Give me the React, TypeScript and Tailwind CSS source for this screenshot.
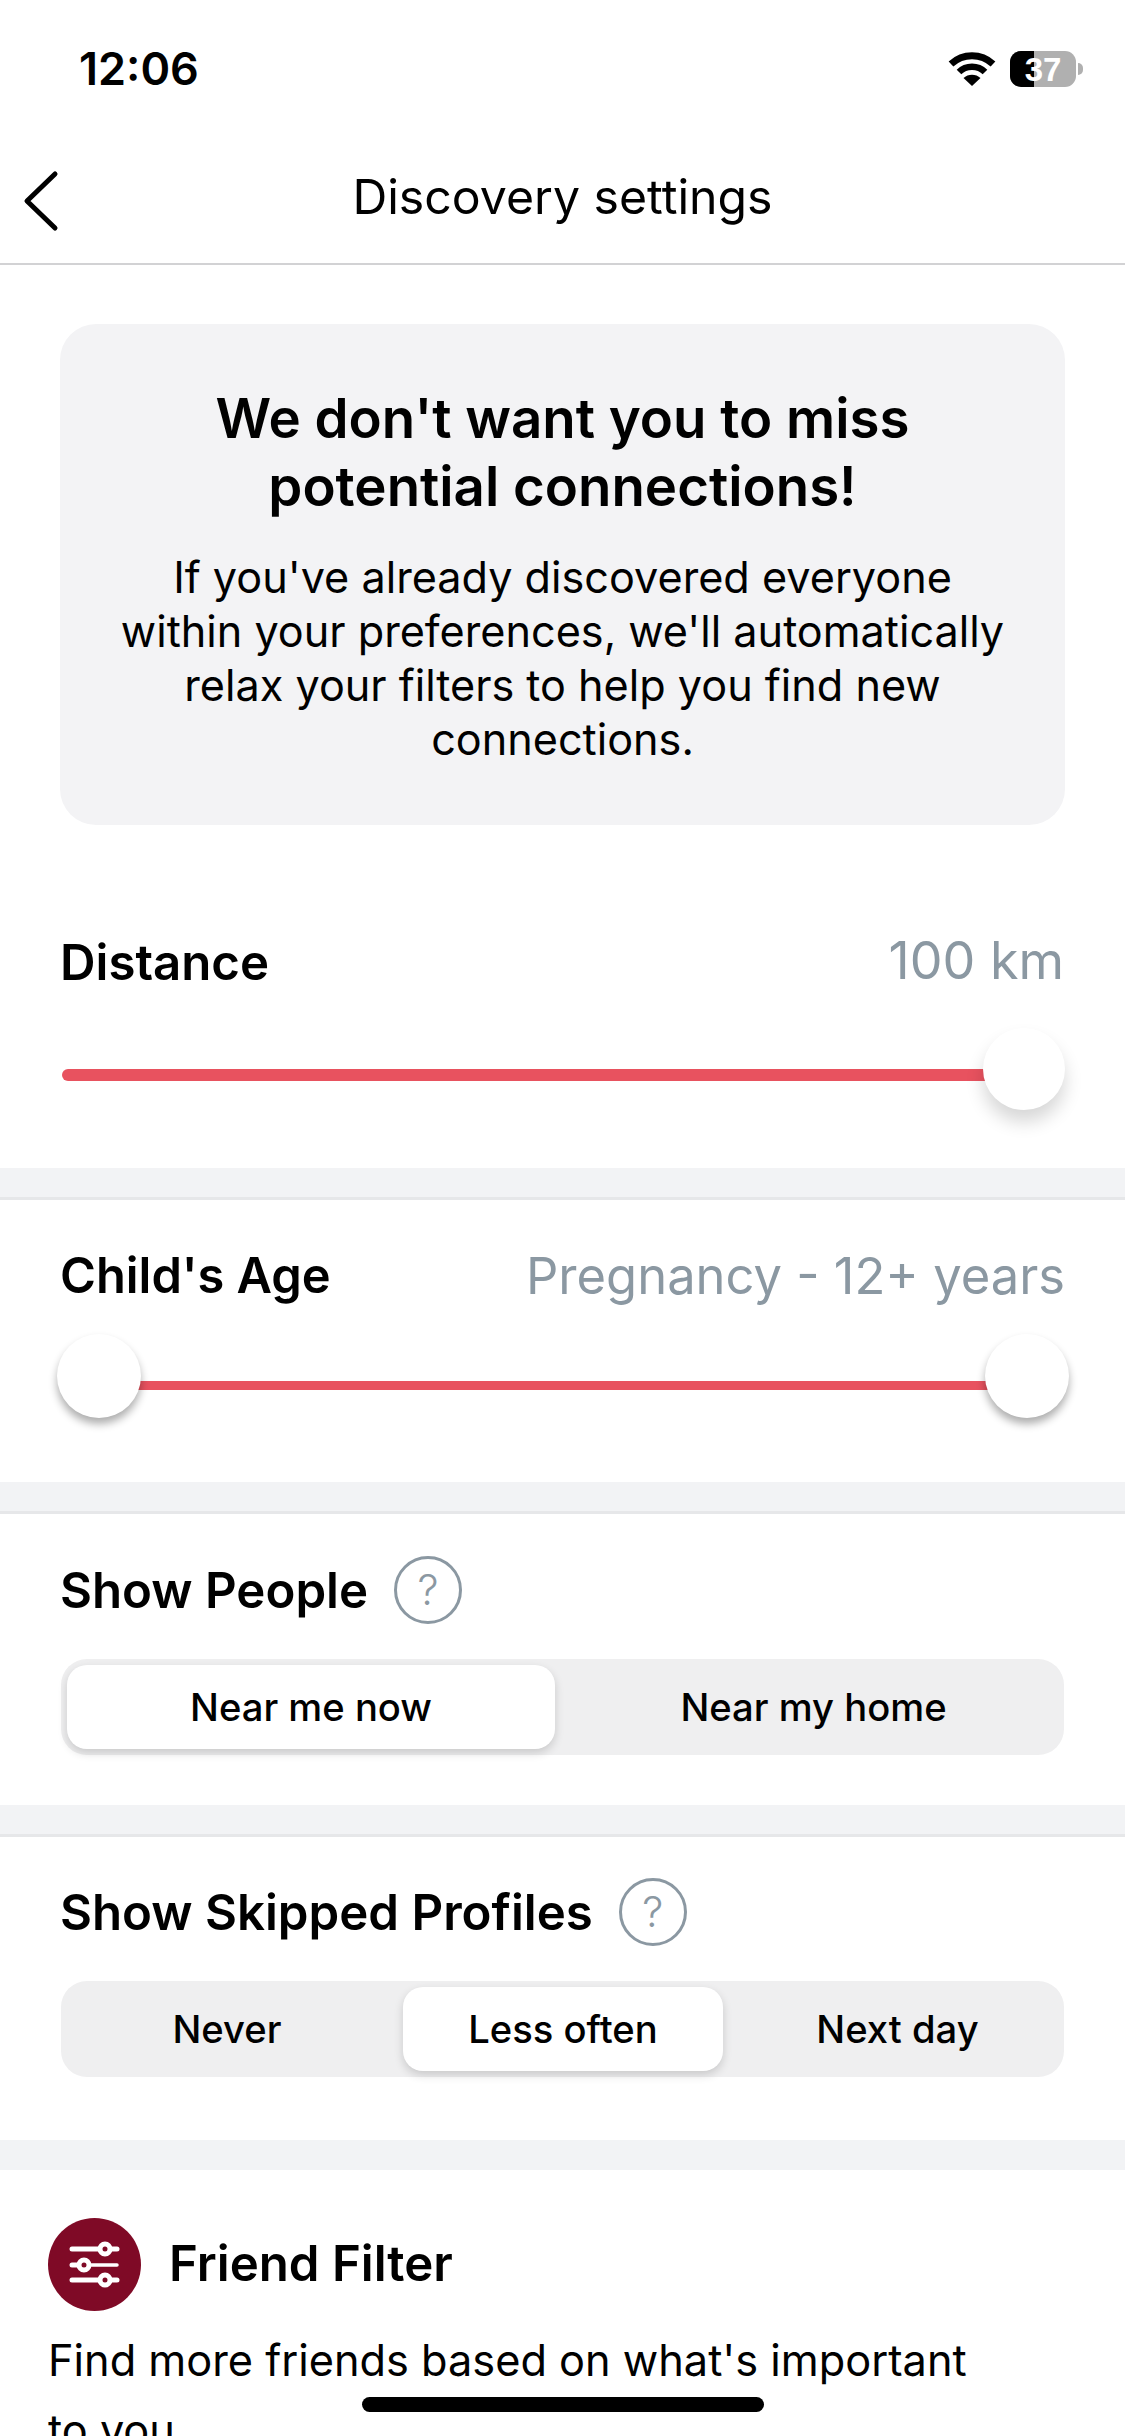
const font = "font-['Inter','Liberation_Sans',sans-serif]";

function HelpIcon() {
  return (
    <span className="flex h-[68px] w-[68px] items-center justify-center rounded-full border-[3px] border-[#8b98a2] text-[42px] font-light leading-none text-[#8b98a2]">
      ?
    </span>
  );
}

function Knob({ className }: { className: string }) {
  return <span className={`absolute rounded-full bg-white ${className}`} />;
}

function Gap({ border = true }: { border?: boolean }) {
  return (
    <div className={`bg-[#f2f3f5] ${border ? "h-[32px] border-b-[3px] border-[#e6e7e9]" : "h-[30px]"}`} />
  );
}

function Segment({
  options,
  active,
  widths,
}: {
  options: string[];
  active: number;
  widths: string[];
}) {
  return (
    <div className="flex h-[96px] items-stretch rounded-[26px] bg-[#efeff0] p-[6px]">
      {options.map((option, i) => (
        <div
          key={option}
          className={`flex items-center justify-center rounded-[20px] text-[38.2px] font-medium leading-none text-black ${widths[i]} ${
            i === active ? "bg-white shadow-[0_4px_10px_rgba(0,0,0,0.16)]" : ""
          }`}
        >
          {option}
        </div>
      ))}
    </div>
  );
}

export default function App() {
  return (
    <div className={`relative h-[2436px] w-[1125px] overflow-hidden bg-white text-black ${font}`}>
      {/* status bar */}
      <div className="flex h-[136px] items-start justify-between pl-[79px] pr-[42px] pt-[46px]">
        <span className="text-[45px] font-semibold leading-[46px]">12:06</span>
        <div className="flex items-center gap-[14px] pt-[5px]">
          <svg width="48" height="36" viewBox="0 0 48 36" fill="none">
            <path d="M3 13 C15 2 33 2 45 13" stroke="#000" strokeWidth="7" strokeLinecap="butt" />
            <path d="M11 21 C18 14 30 14 37 21" stroke="#000" strokeWidth="6.5" />
            <path d="M24 35 L15.5 27 C20 22.5 28 22.5 32.5 27 Z" fill="#000" />
          </svg>
          <div className="flex items-center gap-[2px]">
            <div className="relative flex h-[36px] w-[66px] items-center justify-center overflow-hidden rounded-[11px] bg-[#b0b0b0]">
              <span className="absolute inset-y-0 left-0 w-[24px] bg-black" />
              <span className="relative font-['Liberation_Sans',sans-serif] text-[33px] font-bold leading-none text-white">
                37
              </span>
            </div>
            <span className="h-[12px] w-[5px] rounded-r-full bg-[#b0b0b0]" />
          </div>
        </div>
      </div>

      {/* nav */}
      <div className="relative flex h-[129px] items-center justify-center border-b-[2px] border-[#d2d2d4]">
        <svg className="absolute left-[22px] top-[34px]" width="38" height="62" viewBox="0 0 38 62" fill="none">
          <path d="M33 4 L5 31 L33 58" stroke="#000" strokeWidth="5" strokeLinecap="round" strokeLinejoin="round" />
        </svg>
        <span className="mb-[5px] text-[48.2px] leading-none">Discovery settings</span>
      </div>

      {/* intro card */}
      <div className="px-[60px] pt-[59px]">
        <div className="flex h-[501px] flex-col items-center rounded-[36px] bg-[#f3f3f5] px-[40px] pt-[60px] text-center">
          <h1 className="text-[54.6px] font-semibold leading-[68px]">
            We don't want you to miss
            <br />
            potential connections!
          </h1>
          <p className="mt-[30px] text-[43.2px] leading-[54px]">
            If you've already discovered everyone
            <br />
            within your preferences, we'll automatically
            <br />
            relax your filters to help you find new
            <br />
            connections.
          </p>
        </div>
      </div>

      {/* distance */}
      <section className="h-[343px] pl-[60px] pr-[61px] pt-[106px]">
        <div className="flex items-center justify-between">
          <h2 className="text-[49.2px] font-semibold leading-[62px]">Distance</h2>
          <span className="mb-[2px] text-[52px] leading-[60px] text-[#8b98a2]">100 km</span>
        </div>
        <div className="relative mt-[76px] h-[12px]">
          <div className="ml-[2px] mr-[30px] h-full rounded-full bg-[#e8525f]" />
          <Knob className="right-[-1px] top-[-41px] h-[82px] w-[82px] shadow-[0_12px_18px_rgba(0,0,0,0.16)]" />
        </div>
      </section>
      <Gap />

      {/* child's age */}
      <section className="h-[282px] pl-[60px] pr-[60px] pt-[45px]">
        <div className="flex items-center justify-between">
          <h2 className="text-[48.8px] font-semibold leading-[62px]">Child's Age</h2>
          <span className="text-[50.7px] leading-[62px] text-[#8b98a2]">Pregnancy - 12+ years</span>
        </div>
        <div className="relative mt-[74px] h-[9px]">
          <div className="mx-[30px] h-full bg-[#e8525f]" />
          <Knob className="left-[-3px] top-[-47px] h-[84px] w-[84px] shadow-[0_6px_8px_rgba(0,0,0,0.32)]" />
          <Knob className="right-[-4px] top-[-47px] h-[84px] w-[84px] shadow-[0_6px_8px_rgba(0,0,0,0.32)]" />
        </div>
      </section>
      <Gap />

      {/* show people */}
      <section className="h-[291px] pl-[60px] pr-[61px] pt-[42px]">
        <div className="flex items-center gap-[26px]">
          <h2 className="text-[49.2px] font-semibold leading-[68px]">Show People</h2>
          <HelpIcon />
        </div>
        <div className="ml-[1px] mt-[35px]">
          <Segment
            options={["Near me now", "Near my home"]}
            active={0}
            widths={["w-[488px]", "flex-1 pl-[14px]"]}
          />
        </div>
      </section>
      <Gap />

      {/* skipped profiles */}
      <section className="h-[303px] pl-[60px] pr-[61px] pt-[41px]">
        <div className="flex items-center gap-[26px]">
          <h2 className="text-[49.2px] font-semibold leading-[68px]">Show Skipped Profiles</h2>
          <HelpIcon />
        </div>
        <div className="ml-[1px] mt-[35px]">
          <Segment
            options={["Never", "Less often", "Next day"]}
            active={1}
            widths={["w-[336px] pr-[16px]", "w-[320px]", "flex-1 pl-[14px]"]}
          />
        </div>
      </section>
      <Gap border={false} />

      {/* friend filter */}
      <section className="px-[48px] pt-[48px]">
        <div className="flex items-center gap-[28px]">
          <div className="flex h-[93px] w-[93px] items-center justify-center rounded-full bg-[#7f0a26]">
            <svg width="93" height="93" viewBox="0 0 93 93" fill="none">
              <path d="M24 31 H69" stroke="#fff" strokeWidth="5" strokeLinecap="round" />
              <path d="M24 47 H35" stroke="#fff" strokeWidth="5" strokeLinecap="round" />
              <path d="M40 47 H69" stroke="#fff" strokeWidth="3.5" strokeLinecap="round" />
              <path d="M24 62 H69" stroke="#fff" strokeWidth="5" strokeLinecap="round" />
              <circle cx="57" cy="31" r="5" fill="#7f0a26" stroke="#fff" strokeWidth="5" />
              <circle cx="36" cy="47" r="5" fill="#7f0a26" stroke="#fff" strokeWidth="5" />
              <circle cx="57" cy="62" r="5" fill="#7f0a26" stroke="#fff" strokeWidth="5" />
            </svg>
          </div>
          <h2 className="mb-[2px] text-[49.2px] font-semibold leading-none">Friend Filter</h2>
        </div>
        <p className="mt-[14px] text-[43.3px] leading-[70px]">
          Find more friends based on what's important
          <br />
          to you
        </p>
      </section>

      {/* home indicator */}
      <div className="absolute bottom-[24px] left-[362px] h-[15px] w-[402px] rounded-full bg-black" />
    </div>
  );
}
